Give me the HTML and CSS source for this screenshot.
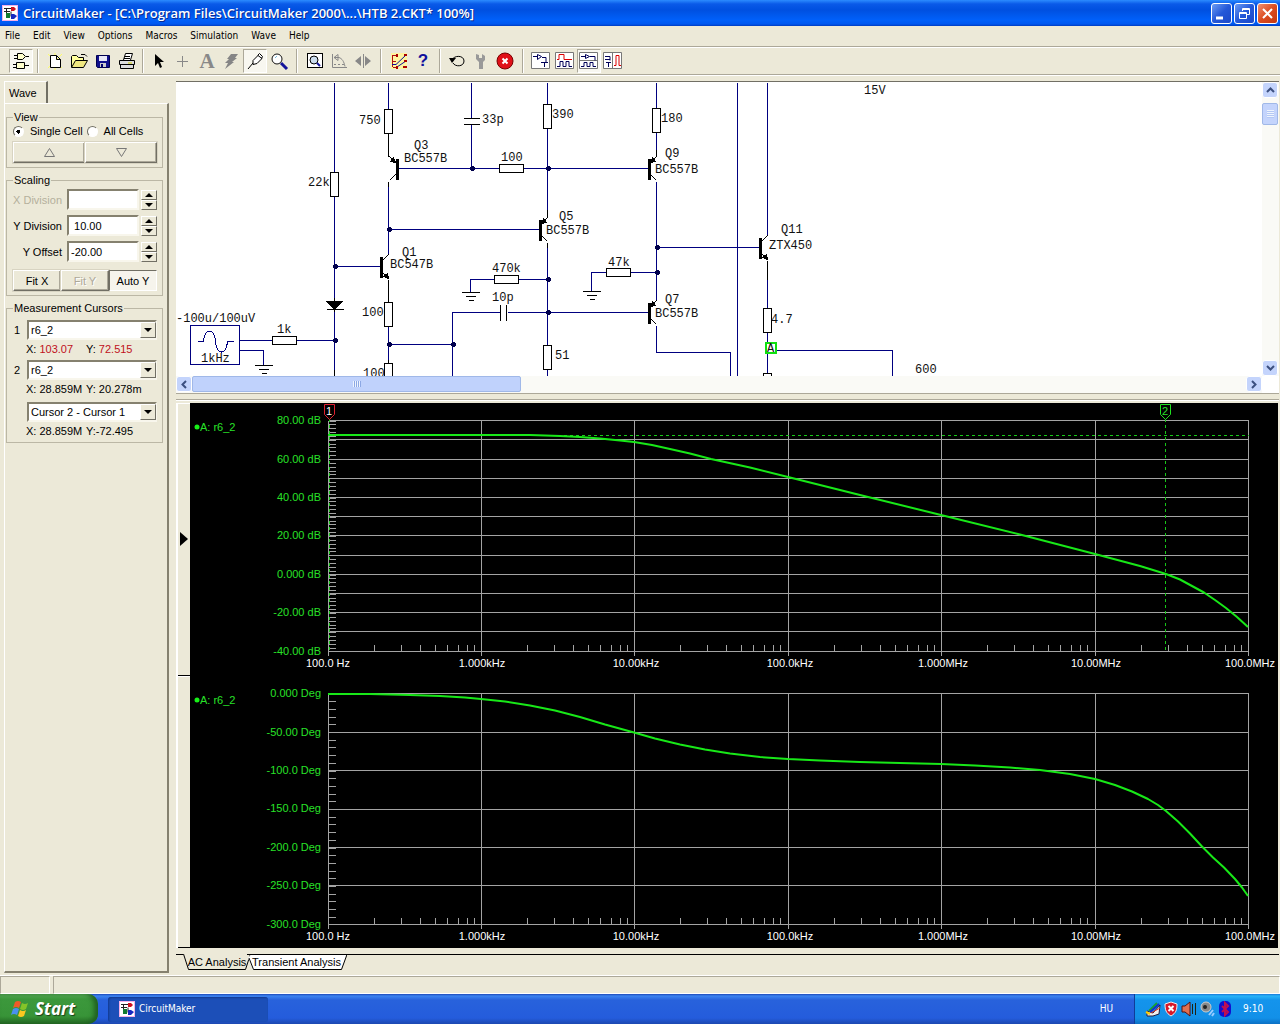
FILE: index.html
```html
<!DOCTYPE html>
<html lang="en">
<head>
<meta charset="utf-8">
<title>CircuitMaker</title>
<link rel="stylesheet" href="styles.css">
</head>
<body>
<svg class="defs" width="0" height="0" aria-hidden="true">
  <defs>
    <symbol id="app" viewBox="0 0 16 16">
      <rect width="16" height="16" fill="#fff"/><rect x=".5" y=".5" width="15" height="15" fill="none" stroke="#f4b0e8"/>
      <path d="M2 3.500h7M4.500 3v9M2 6.500h6M9 6.500v5" stroke="#222" fill="none"/>
      <path d="M9 2h3l2 2-2 2H9z" fill="#d01020"/><path d="M4 8h4v5H4z" fill="#117a30"/><path d="M9 9h3l3 2-3 3H9z" fill="#1828c0"/>
    </symbol>
    <g id="rv"><rect x="-4" y="0" width="8" height="24" fill="#fff" stroke="#000"/></g>
    <g id="rh"><rect x="0" y="-4" width="24" height="8" fill="#fff" stroke="#000"/></g>
    <g id="gnd"><path d="M-9 0H9M-5 4H5M-2 8H3" stroke="#000"/></g>
    <g id="node"><path d="M-1-2H2M-2-1H3M-2 0H3M-2 1H3M-1 2H2" stroke="#00004c"/></g>
    <g id="pnp"><rect x="0" y="-10" width="3" height="21" fill="#000" stroke="none"/><path d="M3-6 9-12M3 6 9 12" stroke="#000" fill="none"/><path d="M3-6 5-11 8-7z" fill="#000" stroke="#000"/></g>
    <g id="npn"><rect x="0" y="-10" width="3" height="21" fill="#000" stroke="none"/><path d="M3-6 9-12M3 6 9 12" stroke="#000" fill="none"/><path d="M9 12 4 10 8 7z" fill="#000" stroke="#000"/></g>
    <path id="logticks" d="M46-7V0M73-7V0M92-7V0M107-7V0M119-7V0M130-7V0M139-7V0M146-7V0"/>
  </defs>
</svg>

<header class="titlebar">
  <svg class="appicon" width="16" height="16"><use href="#app"/></svg>
  <h1>CircuitMaker - [C:\Program Files\CircuitMaker 2000\...\HTB 2.CKT* 100%]</h1>
  <div class="winbtns">
    <button aria-label="Minimize"><svg width="19" height="19"><path d="M4 14h7" stroke="#fff" stroke-width="3"/></svg></button>
    <button aria-label="Restore"><svg width="19" height="19" fill="none" stroke="#fff"><path d="M7.500 7V4.500h7v6H12M7 5.500h8M4.500 8.500h7v6h-7zM4 9.500h8"/></svg></button>
    <button class="close" aria-label="Close"><svg width="19" height="19"><path d="M5 5l9 9M14 5l-9 9" stroke="#fff" stroke-width="2"/></svg></button>
  </div>
</header>

<nav class="menu">
  <a href="#">File</a><a href="#">Edit</a><a href="#">View</a><a href="#">Options</a><a href="#">Macros</a><a href="#">Simulation</a><a href="#">Wave</a><a href="#">Help</a>
</nav>

<div class="toolbar">
  <button class="on" aria-label="Browse"><svg width="20" height="20" fill="#ffc" stroke="#000"><path d="M6.500 2.500h5l3 3-3 3h-5zM3 4.500h3M3 7.500h3M15 5.500h3M5.500 11.500h8v6h-8zM2 13.500h3M2 16.500h3M14 14.500h4"/></svg></button>
  <i class="sep"></i>
  <button aria-label="New"><svg width="20" height="20"><path d="M3 3l14 14M17 3L3 17M10 2v17" stroke="#ff6"/><path d="M5.500 4.500h6l4 4v8h-10zM11.500 4.500v4h4" fill="#fff" stroke="#000"/></svg></button>
  <button aria-label="Open"><svg width="20" height="20"><path d="M2.500 16V5.500l1-1h4l2 2h5v3" fill="#ffff9c" stroke="#000"/><path d="M2.500 16.500l4-7h12l-4 7z" fill="#f0e880" stroke="#000"/><path d="M12 3.500h4l2 2" fill="none" stroke="#000"/></svg></button>
  <button aria-label="Save"><svg width="20" height="20"><path d="M3.500 4.500h13v12h-12l-1-1z" fill="#10108c" stroke="#000050"/><path d="M6 5h8v5H6z" fill="#e8e8f8"/><path d="M7 12h6v4H7z" fill="#ccc"/><path d="M8 13h2v3H8z" fill="#000070"/></svg></button>
  <button aria-label="Print"><svg width="20" height="20"><path d="M6.500 9l2-6.500h7L13.500 9M8 5.500h5M7 7.500h6" fill="#fff" stroke="#000"/><path d="M2.500 9.500h15v4h-15zM3.500 13.500h13v4h-13z" fill="#ddd" stroke="#000"/><path d="M11 12h4" stroke="#cc0"/></svg></button>
  <i class="sep narrow"></i>
  <button aria-label="Select"><svg width="20" height="20"><path d="M6 3v12l3-3 2 5 2-1-2-5h4z"/></svg></button>
  <button aria-label="Wire"><svg width="20" height="20"><path d="M9.500 5v11M4 10.500h11" stroke="#888"/></svg></button>
  <button class="letter" aria-label="Text">A</button>
  <button aria-label="Delete"><svg width="20" height="20"><path d="M10 3h7l-3 4h2l-5 4h2l-9 7 3-6H4l4-4H6z" fill="#858585"/></svg></button>
  <button class="on" aria-label="Probe"><svg width="20" height="20" fill="#fff" stroke="#000"><path d="M3 18l5-6M8 9.500l5-5 4 3-5 5-4 1zM12.500 4.500l2-2 3 3-1 2"/></svg></button>
  <button aria-label="Zoom"><svg width="20" height="20"><circle cx="8" cy="8" r="5" fill="#fff" stroke="#111"/><path d="M6 7l2-2" stroke="#7bd"/><path d="M12 12l6 6" stroke="#14149a" stroke-width="3"/></svg></button>
  <i class="sep wide"></i>
  <button aria-label="Zoom to fit"><svg width="20" height="20"><rect x="2.500" y="2.500" width="15" height="14" fill="#fff" stroke="#000"/><circle cx="9" cy="9" r="4" fill="#cde" stroke="#000"/><path d="M12 12l3 3" stroke="#14149a" stroke-width="2"/></svg></button>
  <button aria-label="Rotate"><svg width="20" height="20" fill="none" stroke="#888"><path d="M3.500 3v13.500H18M5 6.500h5c3 1 5 4 6 9M5 6.500l4-3v6z"/><path d="M5 13.500h11" stroke-dasharray="2 2"/></svg></button>
  <button aria-label="Mirror"><svg width="20" height="20" fill="#888"><path d="M2 10l6-5v10zM18 10l-6-5v10z"/><path d="M10 3h1v14h-1z"/></svg></button>
  <i class="sep wide"></i>
  <button aria-label="Check"><svg width="20" height="20"><rect x="2" y="2" width="16" height="16" fill="#fff5a0"/><path d="M3.500 4v12M4 4.500h4M4 16.500h4M4 10.500h3" stroke="#b01010" fill="none"/><path d="M3 13.500h4L17 4M8 16l9-6" stroke="#10109c" fill="none" stroke-width="1"/><path d="M15 3h3v2h-3zM15 9h3v2h-3zM14 15h4v2h-4zM7 3h2v3H7zM7 15h2v3H7z" fill="#a00"/></svg></button>
  <button class="letter help" aria-label="Help">?</button>
  <i class="sep"></i>
  <button aria-label="Reset"><svg width="20" height="20"><path d="M5 9c2-5 12-5 12 1s-9 6-11 2" fill="none" stroke="#000"/><path d="M2 7l7 0-4 5z"/></svg></button>
  <button aria-label="Options"><svg width="20" height="20"><path d="M5 3l3 1v3h3V3l3 2v4l-2 2v7H8v-7L5 8z" fill="#999"/></svg></button>
  <button aria-label="Stop"><svg width="20" height="20"><circle cx="10" cy="10" r="8" fill="#e01018" stroke="#700"/><path d="M7.500 7.500l5 5M12.500 7.500l-5 5" stroke="#fff" stroke-width="2"/></svg></button>
  <i class="sep wide"></i>
  <button aria-label="Schematic"><svg width="20" height="20" fill="none" stroke="#000058"><path d="M.500 1.500h18v16H.500z" fill="#fff" stroke="#777"/><path d="M2 5.500h4M6.500 3.500l4 2-4 3zM11 6.500h4v5M10 11.500h7M13.500 12v4"/></svg></button>
  <button aria-label="Waveforms"><svg width="20" height="20" fill="none" stroke="#000058"><path d="M.500 1.500h18v16H.500z" fill="#fff" stroke="#777"/><path d="M2 8.500h2v-5h5v5h8" stroke="#d00"/><path d="M2 15.500h3v-5h3v5h3v-5h3v5h3"/></svg></button>
  <button class="on" aria-label="Split horizontally"><svg width="20" height="20" fill="none" stroke="#000058"><path d="M.500 1.500h18v16H.500zM0 9.500h19" fill="#fff" stroke="#777"/><path d="M2 5.500h4M6.500 3.500l4 2-4 2zM11 5.500h5v4M2 15.500h3v-4h3v4h3v-4h3v4h3"/></svg></button>
  <button aria-label="Split vertically"><svg width="20" height="20" fill="none" stroke="#000058"><path d="M.500 1.500h18v16H.500zM9.500 2v16" fill="#fff" stroke="#777"/><path d="M2 5.500h5v4M2 8.500h5M3 11.500h5M5.500 12v4"/><path d="M11 14.500h2v-10h3v10h2" stroke="#d00"/></svg></button>
</div>

<main class="work">
  <aside class="panel">
    <div class="ptab">Wave</div>
    <div class="pbody">
      <fieldset>
        <legend>View</legend>
        <div class="radios">
          <label><input type="radio" name="cells" checked>Single Cell</label>
          <label><input type="radio" name="cells">All Cells</label>
        </div>
        <div class="btnrow">
          <button class="btn" aria-label="Previous cell"><svg width="11" height="9" fill="none" stroke="#777"><path d="M.500 8.500h10l-5-8z"/></svg></button>
          <button class="btn" aria-label="Next cell"><svg width="11" height="9" fill="none" stroke="#777"><path d="M.500.500h10l-5 8z"/></svg></button>
        </div>
      </fieldset>
      <fieldset>
        <legend>Scaling</legend>
        <div class="field"><label class="dim" for="xd">X Division</label><input id="xd" type="text"><span class="spin"><button aria-label="X up"><svg width="8" height="4"><path d="M0 4l4-4 4 4z"/></svg></button><button aria-label="X down"><svg width="8" height="4"><path d="M0 0l4 4 4-4z"/></svg></button></span></div>
        <div class="field"><label for="yd">Y Division</label><input id="yd" type="text" value=" 10.00"><span class="spin"><button aria-label="Y up"><svg width="8" height="4"><path d="M0 4l4-4 4 4z"/></svg></button><button aria-label="Y down"><svg width="8" height="4"><path d="M0 0l4 4 4-4z"/></svg></button></span></div>
        <div class="field"><label for="yo">Y Offset</label><input id="yo" type="text" value="-20.00"><span class="spin"><button aria-label="Offset up"><svg width="8" height="4"><path d="M0 4l4-4 4 4z"/></svg></button><button aria-label="Offset down"><svg width="8" height="4"><path d="M0 0l4 4 4-4z"/></svg></button></span></div>
        <div class="btnrow fit">
          <button class="btn">Fit X</button><button class="btn" disabled>Fit Y</button><button class="btn down">Auto Y</button>
        </div>
      </fieldset>
      <fieldset>
        <legend>Measurement Cursors</legend>
        <div class="cursor"><label for="c1">1</label><span class="combo"><select id="c1"><option>r6_2</option></select><svg width="8" height="4"><path d="M0 0l4 4 4-4z"/></svg></span></div>
        <div class="read"><span>X: <b>103.07</b></span><span>Y: <b>72.515</b></span></div>
        <div class="cursor"><label for="c2">2</label><span class="combo"><select id="c2"><option>r6_2</option></select><svg width="8" height="4"><path d="M0 0l4 4 4-4z"/></svg></span></div>
        <div class="read"><span>X: 28.859M</span><span>Y: 20.278m</span></div>
        <div class="cursor diff"><span class="combo"><select aria-label="Difference"><option>Cursor 2 - Cursor 1</option></select><svg width="8" height="4"><path d="M0 0l4 4 4-4z"/></svg></span></div>
        <div class="read"><span>X: 28.859M</span><span>Y:-72.495</span></div>
      </fieldset>
    </div>
  </aside>

  <section class="docs">
    <div class="schematic">
      <div class="canvas">
        <svg width="1084" height="294" viewBox="176 83 1084 294" aria-label="Amplifier schematic">
          <g transform="translate(.5 .5)" fill="none" stroke="#000080" shape-rendering="crispEdges">
            <path d="M334 83V377M388 83V157M388 182V254M388 280V377M471 83V119M471 125V169M547 83V217M547 243V377M656 83V157M656 182V300M656 326V353H730V377M737 83V377M767 83V236M767 261V377M398 169H648M388 230H538M334 267H379M388 345H452M452 377V313H500M507 313H648M656 248H758M547 280H470V293M656 273H591V292M239 341H334M239 351H263V366M770 351H892V377"/>
            <path d="M388 134V157M388 182V187M388 280V303M547 210V218M547 243V248M656 150V157M767 261V280M334 298V312M388 360V364M334 370V377" stroke="#000"/>
            <use href="#rv" x="334" y="173"/><use href="#rv" x="388" y="110"/><use href="#rv" x="388" y="303"/><use href="#rv" x="388" y="364"/>
            <use href="#rv" x="547" y="105"/><use href="#rv" x="547" y="346"/><use href="#rv" x="656" y="109"/><use href="#rv" x="767" y="309"/><use href="#rv" x="767" y="374"/>
            <use href="#rh" x="499" y="169"/><use href="#rh" x="494" y="280"/><use href="#rh" x="606" y="273"/><use href="#rh" x="272" y="341"/>
            <use href="#gnd" x="470" y="293"/><use href="#gnd" x="591" y="292"/><use href="#gnd" x="263" y="366"/>
            <path d="M463 119H479M463 125H479M500 305V321M506 305V321M326 310H343" stroke="#000"/>
            <path d="M326 302H342L334 310Z" fill="#000" stroke="#000"/>
            <use href="#pnp" x="647" y="169"/><use href="#pnp" x="647" y="313"/><use href="#pnp" x="538" y="230"/>
            <use href="#pnp" transform="translate(398 169) scale(-1 1)"/>
            <use href="#npn" x="379" y="267"/><use href="#npn" x="758" y="248"/>
            <use href="#node" x="334" y="267"/><use href="#node" x="334" y="341"/><use href="#node" x="388" y="230"/><use href="#node" x="388" y="345"/><use href="#node" x="452" y="345"/><use href="#node" x="471" y="169"/><use href="#node" x="547" y="169"/><use href="#node" x="547" y="280"/><use href="#node" x="547" y="313"/><use href="#node" x="656" y="248"/><use href="#node" x="656" y="273"/>
            <rect x="190" y="326" width="49" height="39"/>
            <path d="M197 342H203C204 328 214 328 215 342S226 356 227 342H233"/>
            <rect x="765" y="343" width="10" height="10" fill="#fff" stroke="#10e010" stroke-width="2"/>
          </g>
          <g class="sch">
            <text x="359" y="125">750</text><text x="414" y="150">Q3</text><text x="404" y="163">BC557B</text><text x="308" y="187">22k</text>
            <text x="402" y="257">Q1</text><text x="390" y="269">BC547B</text><text x="362" y="317">100</text><text x="363" y="378">100</text>
            <text x="482" y="124">33p</text><text x="552" y="119">390</text><text x="501" y="162">100</text><text x="661" y="123">180</text>
            <text x="665" y="158">Q9</text><text x="655" y="174">BC557B</text><text x="559" y="221">Q5</text><text x="546" y="235">BC557B</text>
            <text x="492" y="273">470k</text><text x="492" y="302">10p</text><text x="608" y="267">47k</text><text x="665" y="304">Q7</text>
            <text x="655" y="318">BC557B</text><text x="555" y="360">51</text><text x="781" y="234">Q11</text><text x="769" y="250">ZTX450</text>
            <text x="771" y="324">4.7</text><text x="864" y="95">15V</text><text x="915" y="374">600</text><text x="176" y="323">-100u/100uV</text>
            <text x="277" y="334">1k</text><text x="201" y="363">1kHz</text><text x="767" y="353">A</text>
          </g>
        </svg>
      </div>
      <div class="vscroll">
        <button aria-label="Scroll up"><svg width="9" height="6"><path d="M1 5l3.500-3.500L8 5"/></svg></button>
        <div class="vthumb"></div>
        <button class="last" aria-label="Scroll down"><svg width="9" height="6"><path d="M1 1l3.500 3.500L8 1"/></svg></button>
      </div>
      <div class="hscroll">
        <button aria-label="Scroll left"><svg width="6" height="9"><path d="M5 1L1.500 4.500 5 8"/></svg></button>
        <div class="hthumb"></div>
        <button class="last" aria-label="Scroll right"><svg width="6" height="9"><path d="M1 1l3.500 3.500L1 8"/></svg></button>
      </div>
    </div>

    <div class="waves">
      <div class="gutter"><div><svg width="8" height="14"><path d="M0 0l8 7-8 7z"/></svg></div><div></div></div>
      <svg class="plot" viewBox="190 403 1088 545" aria-label="AC analysis">
        <rect x="190" y="403" width="1088" height="545"/>
        <g transform="translate(.5 .5)" fill="none" stroke="#a4a4a4" shape-rendering="crispEdges">
          <path d="M328 420H1248M328 439H1248M328 459H1248M328 478H1248M328 497H1248M328 516H1248M328 535H1248M328 555H1248M328 574H1248M328 593H1248M328 612H1248M328 631H1248M328 651H1248"/>
          <path d="M328 420V655M481 420V655M634 420V655M788 420V655M941 420V655M1095 420V655M1248 420V655"/>
          <path d="M328 693H1248M328 732H1248M328 770H1248M328 809H1248M328 847H1248M328 885H1248M328 924H1248"/>
          <path d="M328 693V928M481 693V928M634 693V928M788 693V928M941 693V928M1095 693V928M1248 693V928"/>
          <path d="M331.500 420V651" stroke-width="7" stroke-dasharray="1 2.850"/>
          <path d="M331.500 693V924" stroke-width="7" stroke-dasharray="1 6.700"/>
          <use href="#logticks" x="328" y="651"/><use href="#logticks" x="481" y="651"/><use href="#logticks" x="634" y="651"/><use href="#logticks" x="788" y="651"/><use href="#logticks" x="941" y="651"/><use href="#logticks" x="1095" y="651"/>
          <use href="#logticks" x="328" y="924"/><use href="#logticks" x="481" y="924"/><use href="#logticks" x="634" y="924"/><use href="#logticks" x="788" y="924"/><use href="#logticks" x="941" y="924"/><use href="#logticks" x="1095" y="924"/>
          <path d="M329 435H1248M329 418V651M1165 418V651" stroke="#18c818" stroke-dasharray="3 3"/>
        </g>
        <path class="trace" d="M328 435H530L560 436 580 437 600 438.500 620 440.500 634 442 652 445 670 449 690 453.500 711 459 750 467.500 788 477 860 495 941 515 1020 534.500 1095 554 1140 566 1166 574 1180 579.500 1192 586 1204 592.500 1215 600 1226 608 1237 617 1248 627"/>
        <path class="trace" d="M328 694H370L410 695 440 696 465 697.500 481 699 505 701.500 530 705.500 555 710.500 580 717 605 724.500 634 732.500 655 738.500 680 744.500 705 749.500 730 753.500 760 757 788 759 820 760.500 860 762 900 763 941 764 975 765.500 1010 767.500 1040 770 1070 774 1095 779 1115 785 1132 791.500 1148 799 1158 805 1166 811 1178 821.500 1190 833.500 1202 846.500 1213 857.500 1224 867.500 1235 879 1242 887.500 1248 896"/>
        <circle cx="197" cy="427" r="2.500" fill="#18f018"/><circle cx="197" cy="700" r="2.500" fill="#18f018"/>
        <g fill="none"><path d="M324.500 404.500h10v10l-5 5-5-5z" fill="#000" stroke="#e02030"/><path d="M1160.500 404.500h10v10l-5 5-5-5z" fill="#000" stroke="#20e020"/></g>
        <g class="green"><text x="200" y="431">A: r6_2</text><text x="200" y="704">A: r6_2</text></g>
        <g class="green end">
          <text x="321" y="424">80.00 dB</text><text x="321" y="463">60.00 dB</text><text x="321" y="501">40.00 dB</text><text x="321" y="539">20.00 dB</text><text x="321" y="578">0.000 dB</text><text x="321" y="616">-20.00 dB</text><text x="321" y="655">-40.00 dB</text>
          <text x="321" y="697">0.000 Deg</text><text x="321" y="736">-50.00 Deg</text><text x="321" y="774">-100.0 Deg</text><text x="321" y="812">-150.0 Deg</text><text x="321" y="851">-200.0 Deg</text><text x="321" y="889">-250.0 Deg</text><text x="321" y="928">-300.0 Deg</text>
        </g>
        <g class="white">
          <text x="329" y="415">1</text><text x="1165" y="415" class="g">2</text>
          <text x="328" y="667">100.0 Hz</text><text x="482" y="667">1.000kHz</text><text x="636" y="667">10.00kHz</text><text x="790" y="667">100.0kHz</text><text x="943" y="667">1.000MHz</text><text x="1096" y="667">10.00MHz</text><text x="1250" y="667">100.0MHz</text>
          <text x="328" y="940">100.0 Hz</text><text x="482" y="940">1.000kHz</text><text x="636" y="940">10.00kHz</text><text x="790" y="940">100.0kHz</text><text x="943" y="940">1.000MHz</text><text x="1096" y="940">10.00MHz</text><text x="1250" y="940">100.0MHz</text>
        </g>
      </svg>
    </div>

    <div class="sheets">
      <i class="lead"></i>
      <button class="sheet"><svg width="68" height="16" fill="none" stroke="#000"><path d="M.500 0l5 15.500h57l5-15.500"/></svg>AC Analysis</button>
      <button class="sheet other"><svg width="100" height="16" fill="#fff" stroke="#000"><path d="M4 .500h96L94 15.500H6L1 4z" stroke="none"/><path d="M0 .500h100L94.500 15.500H6.500L2 4" fill="none"/></svg>Transient Analysis</button>
      <i class="rest"></i>
    </div>
  </section>
</main>

<div class="status"><span></span><span></span></div>

<footer class="taskbar">
  <button class="start"><svg width="20" height="20"><path d="M4 3q3-2 6 0L8 9q-3-2-6 0z" fill="#f05a28"/><path d="M11 4q3 2 6 0l-2 6q-3 2-6 0z" fill="#84c428"/><path d="M2 10q3-2 6 0l-2 6q-3-2-6 0z" fill="#4a90f0"/><path d="M9 11q3 2 6 0l-2 6q-3 2-6 0z" fill="#fcc820"/></svg>Start</button>
  <button class="task"><svg width="16" height="16"><use href="#app"/></svg>CircuitMaker</button>
  <span class="lang">HU</span>
  <div class="tray">
    <svg width="16" height="16"><path d="M2 10l6 2 7-8-1 9-6 2H2z" fill="#eee" stroke="#224"/><path d="M4 10l8-8" stroke="#18a030" stroke-width="2"/><path d="M5 11l9-8" stroke="#1030d0" stroke-width="2"/><path d="M6 12l9-5" stroke="#e03020"/><path d="M1 11l4 2" stroke="#fc0" stroke-width="2"/></svg>
    <svg width="16" height="16"><path d="M8 1l6 2c0 6-1 9-6 12C3 12 2 9 2 3z" fill="#d81828" stroke="#eee"/><path d="M5.500 5l5 5M10.500 5l-5 5" stroke="#fff" stroke-width="2"/></svg>
    <svg width="16" height="16"><path d="M1 5h3l5-4v14l-5-4H1z" fill="#e07050" stroke="#511"/><path d="M11.500 3v10M14.500 2v12" stroke="#221"/></svg>
    <svg width="16" height="16"><circle cx="7" cy="6" r="5" fill="#888" stroke="#ccc"/><circle cx="6" cy="6" r="2" fill="#222"/><path d="M10 14l4-5M13 15l2-3" stroke="#9cf" stroke-width="2"/></svg>
    <svg width="16" height="16"><rect x="2" width="12" height="16" rx="5" fill="#1010d0"/><path d="M5 5l6 6-3 3V2l3 3-6 6" fill="none" stroke="#c01050" stroke-width="2"/></svg>
    <time>9:10</time>
  </div>
</footer>
</body>
</html>
```
FILE: styles.css
```css
* { box-sizing: border-box; }
.defs { position: absolute; }
body {
  margin: 0;
  min-height: 100vh;
  display: flex;
  flex-direction: column;
  background: #ece9d8;
  font: 11px/14px "Liberation Sans", Arial, sans-serif;
  color: #000;
}
button, input, select { font: inherit; color: inherit; margin: 0; padding: 0; border-radius: 0; }
button { border: 0; background: none; }
svg { display: block; flex: none; }

.titlebar {
  height: 26px;
  display: flex;
  align-items: center;
  gap: 5px;
  padding: 0 2px;
  background: linear-gradient(#2c8cff 0, #0a5ae8 4px, #0050e0 10px, #0060fa 20px, #0058f0 24px, #003cc0 26px);
}
.titlebar h1 {
  flex: 1;
  margin: 0;
  font: 600 13px/20px "Open Sans", "Noto Sans", sans-serif;
  color: #fff;
  text-shadow: 1px 1px #0a2a90;
  white-space: nowrap;
}
.winbtns { display: flex; gap: 2px; }
.winbtns button {
  width: 21px;
  height: 21px;
  border: 1px solid #fff;
  border-radius: 3px;
  background: linear-gradient(135deg, #6c9cf4, #2458d8 50%, #1c48c8);
}
.winbtns .close { background: linear-gradient(135deg, #f09070, #dc4c20 50%, #c43810); }

.menu {
  height: 20px;
  display: flex;
  gap: 13px;
  padding: 0 5px;
  font: 10px/19px "DejaVu Sans Condensed", "Noto Sans", sans-serif;
}
.menu a { color: #000; text-decoration: none; }

.toolbar {
  height: 29px;
  flex: none;
  display: flex;
  align-items: center;
  padding: 0 9px;
  border-top: 1px solid #aca899;
  border-bottom: 1px solid #aca899;
  box-shadow: inset 0 1px #fff, 0 1px #fff;
}
.toolbar button { width: 24px; height: 24px; display: grid; place-items: center; }
.toolbar .on { background: #f8f7f0; border: 1px solid; border-color: #aca899 #fff #fff #aca899; }
.toolbar .letter { font: bold 21px/22px "Liberation Serif", serif; color: #888; }
.toolbar .help { font: bold 17px/22px "Liberation Sans", sans-serif; color: #10109c; }
.sep { width: 2px; height: 24px; margin: 0 4px; border-left: 1px solid #aca899; border-right: 1px solid #fff; }
.sep.narrow { margin: 0 3px; }
.sep.wide { margin: 0 5px; }

.work { flex: 1; display: flex; gap: 7px; padding: 6px 1px 2px 4px; }
.panel { width: 165px; flex: none; display: flex; flex-direction: column; }
.ptab {
  width: 44px;
  height: 22px;
  padding: 4px;
  border-right: 2px solid #716f64;
  border-top: 1px solid #fff;
  border-left: 1px solid #fff;
}
.pbody {
  flex: 1;
  display: flex;
  flex-direction: column;
  gap: 6px;
  padding: 7px 4px 0 1px;
  border: 1px solid #fff;
  border-right: 2px solid #85816f;
  border-bottom: 2px solid #85816f;
}
.panel fieldset {
  margin: 0;
  padding: 0 5px 4px 6px;
  min-width: 0;
  border: 1px solid #bbb7a5;
}
.panel legend { padding: 0 1px; line-height: 12px; }
.radios { display: flex; gap: 4px; height: 19px; padding-top: 1px; }
.radios label { display: flex; gap: 6px; height: 14px; align-items: center; white-space: nowrap; }
.radios input {
  appearance: none;
  width: 11px;
  height: 11px;
  border: 1px solid;
  border-color: #716f64 #fff #fff #716f64;
  border-radius: 50%;
  background: #fff;
}
.radios input:checked { background: radial-gradient(circle, #000 0 2px, #fff 2px); }
.btnrow { display: flex; }
.btn {
  flex: 1;
  height: 21px;
  display: grid;
  place-items: center;
  border: 1px solid;
  border-color: #fff #716f64 #716f64 #fff;
  box-shadow: inset -1px -1px #aca899, 0 0 0 1px #d8d4c2;
}
.btn:disabled { color: #aca899; text-shadow: 1px 1px #fff; }
.btn.down { background: #f6f4ec; border-color: #716f64 #fff #fff #716f64; box-shadow: none; }
.fit { margin-top: 8px; }
.field { display: flex; align-items: center; margin: 3px 0 5px; height: 21px; }
.field label { flex: 1; text-align: right; padding-right: 5px; white-space: nowrap; }
.field .dim { color: #b4b09c; }
.field input {
  width: 72px;
  height: 21px;
  padding: 0 2px;
  border: 2px solid;
  border-color: #85816f #f8f6ec #f8f6ec #85816f;
  background: #fff;
}
.spin { width: 16px; height: 20px; margin-left: 2px; display: flex; flex-direction: column; }
.spin button {
  flex: 1;
  display: grid;
  place-items: center;
  border: 1px solid;
  border-color: #fff #716f64 #716f64 #fff;
}
.cursor { display: flex; align-items: center; margin-top: 6px; height: 20px; }
.cursor label { width: 14px; padding-left: 1px; }
.cursor.diff { margin-top: 8px; padding-left: 14px; }
.combo { position: relative; flex: 1; height: 20px; }
.combo select {
  appearance: none;
  width: 100%;
  height: 20px;
  padding: 0 2px;
  border: 2px solid;
  border-color: #85816f #f8f6ec #f8f6ec #85816f;
  background: #fff;
}
.combo svg {
  position: absolute;
  right: 1px;
  top: 2px;
  width: 16px;
  height: 16px;
  padding: 5px 3px;
  background: #ece9d8;
  border: 1px solid;
  border-color: #fff #716f64 #716f64 #fff;
  pointer-events: none;
}
.read { display: grid; grid-template-columns: 60px 1fr; padding-left: 13px; height: 14px; line-height: 18px; white-space: nowrap; }
.read b { font-weight: normal; color: #c01020; }
.read:last-child { margin-bottom: 2px; }

.docs { flex: 1; min-width: 0; display: flex; flex-direction: column; }
.schematic {
  display: grid;
  grid-template-columns: 1fr 17px;
  grid-template-rows: 294px 17px;
  border-top: 1px solid #716f64;
  border-bottom: 1px solid #aca899;
  background: #fff;
}
.canvas { overflow: hidden; min-width: 0; }
.sch text { font: 12px "Liberation Mono", "Courier New", monospace; white-space: pre; fill: #111; }
.vscroll, .hscroll { display: flex; background: #fafaf6; }
.vscroll { flex-direction: column; }
.hscroll { grid-column: 1; }
.schematic button {
  width: 16px;
  height: 16px;
  display: grid;
  place-items: center;
  border: 1px solid #fff;
  border-radius: 3px;
  background: #c4d4fc;
}
.schematic button path { fill: none; stroke: #3c5080; stroke-width: 2; }
.schematic .last { margin: auto 0 0; }
.hscroll .last { margin: 0 0 0 auto; }
.vthumb { height: 22px; width: 16px; margin-top: 5px; border: 1px solid #a0b8e8; border-radius: 2px; background: repeating-linear-gradient(#eef4fe 0 1px, #b4c8f4 1px 2px) center / 7px 8px no-repeat #c4d4fc; }
.hthumb { width: 329px; height: 16px; border: 1px solid #a0b8e8; border-radius: 2px; background: repeating-linear-gradient(90deg, #eef4fe 0 1px, #8ca8e4 1px 2px) center / 8px 6px no-repeat #c0d2fc; }

.waves {
  display: flex;
  margin-top: 5px;
  padding: 3px 1px 0 0;
  border-top: 1px solid #aca899;
  box-shadow: inset 0 1px #fff;
}
.gutter { width: 14px; flex: none; display: flex; flex-direction: column; border-left: 2px solid #fff; }
.gutter div { flex: 1; display: flex; align-items: center; padding-left: 2px; border-bottom: 1px solid #000; box-shadow: inset 0 1px #fff; }
.plot { flex: 1; min-width: 0; height: auto; }
.trace { fill: none; stroke: #18e818; stroke-width: 2; stroke-linejoin: round; }
.plot text { font: 11px "Liberation Sans", Arial, sans-serif; }
.green text, .white .g { fill: #28e028; }
.end text { text-anchor: end; }
.white text { fill: #fff; text-anchor: middle; }
.white text.g { fill: #28e028; }

.sheets { display: flex; margin-top: 6px; height: 18px; }
.lead { width: 7px; height: 1px; background: #000; }
.rest { flex: 1; height: 1px; background: #000; }
.sheet { position: relative; z-index: 0; width: 68px; height: 16px; line-height: 16px; white-space: nowrap; }
.sheet svg { position: absolute; z-index: -1; left: 0; top: 0; }
.sheet.other { width: 96px; margin-left: -4px; padding-left: 3px; }

.status { height: 19px; flex: none; display: flex; gap: 3px; border-top: 1px solid #fff; }
.status span { flex: 1; border: 1px solid; border-color: #aca899 #fff #fff #aca899; }
.status span:first-child { flex: none; width: 50px; }

.taskbar {
  height: 30px;
  flex: none;
  display: flex;
  align-items: center;
  color: #fff;
  font: 10px/14px "DejaVu Sans Condensed", "Noto Sans", sans-serif;
  background: linear-gradient(#1c48b8 0, #3c84f0 2px, #2862dc 6px, #245cdc 24px, #1c48b0);
}
.start {
  width: 98px;
  height: 30px;
  display: flex;
  align-items: center;
  gap: 4px;
  padding-left: 11px;
  border-radius: 0 10px 10px 0;
  background: linear-gradient(#60b860 0, #3c983c 5px, #389438 22px, #246824);
  box-shadow: inset -4px 0 5px #206020;
  font: italic bold 17px/20px "Open Sans", "Noto Sans", sans-serif;
  text-shadow: 1px 1px 1px #1a401a;
}
.task {
  width: 160px;
  height: 25px;
  margin-left: 10px;
  display: flex;
  align-items: center;
  gap: 4px;
  padding-left: 11px;
  border-radius: 3px;
  background: #1c4fb8;
  box-shadow: inset 1px 1px 2px #123a90;
}
.lang { margin-left: auto; padding-right: 21px; }
.tray {
  height: 30px;
  width: 146px;
  display: flex;
  align-items: center;
  gap: 2px;
  padding-left: 10px;
  border-left: 1px solid #103c98;
  background: linear-gradient(#1878d8 0, #28b4f8 2px, #1494ec 6px, #1290e8 24px, #0c70c4);
}
.tray time { margin-left: 8px; }
```
